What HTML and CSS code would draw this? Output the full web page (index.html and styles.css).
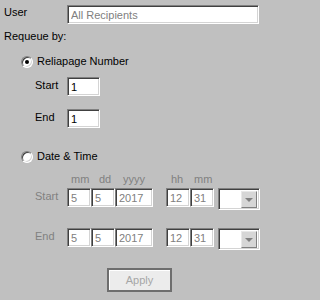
FILE: index.html
```html
<!DOCTYPE html>
<html>
<head>
<meta charset="utf-8">
<link rel="stylesheet" href="styles.css">
</head>
<body>
<div class="panel">
  <div class="user-row">
    <span class="user-label">User</span>
    <input class="field user-field" type="text" value="All Recipients" disabled>
  </div>
  <div class="requeue">Requeue by:</div>

  <div class="radio-row first-radio">
    <span class="radio checked"></span>
    <span class="radio-text">Reliapage Number</span>
  </div>
  <div class="num-row start-num">
    <span class="num-label">Start</span>
    <input class="field num-field" type="text" value="1">
  </div>
  <div class="num-row end-num">
    <span class="num-label">End</span>
    <input class="field num-field" type="text" value="1">
  </div>

  <div class="radio-row second-radio">
    <span class="radio"></span>
    <span class="radio-text">Date &amp; Time</span>
  </div>

  <div class="head-row">
    <span class="h h-mm">mm</span>
    <span class="h h-dd">dd</span>
    <span class="h h-yy">yyyy</span>
    <span class="h h-hh">hh</span>
    <span class="h h-mi">mm</span>
  </div>

  <div class="date-row start-date">
    <span class="date-label">Start</span>
    <input class="field dis w24" type="text" value="5" disabled>
    <input class="field dis w24" type="text" value="5" disabled>
    <input class="field dis w38" type="text" value="2017" disabled>
    <input class="field dis w24 gap-l" type="text" value="12" disabled>
    <input class="field dis w24" type="text" value="31" disabled>
    <span class="combo"><span class="combo-btn"><span class="arrow"></span></span></span>
  </div>

  <div class="date-row end-date">
    <span class="date-label">End</span>
    <input class="field dis w24" type="text" value="5" disabled>
    <input class="field dis w24" type="text" value="5" disabled>
    <input class="field dis w38" type="text" value="2017" disabled>
    <input class="field dis w24 gap-l" type="text" value="12" disabled>
    <input class="field dis w24" type="text" value="31" disabled>
    <span class="combo"><span class="combo-btn"><span class="arrow"></span></span></span>
  </div>

  <div class="apply-row">
    <button class="apply" disabled>Apply</button>
  </div>
</div>
</body>
</html>
```

FILE: styles.css
```css
html, body {
  margin: 0;
  padding: 0;
}
body {
  width: 266px;
  height: 300px;
  background: #c0c0c0;
  font-family: "Liberation Sans", Arial, sans-serif;
  font-size: 11px;
  line-height: 13px;
  color: #000;
  overflow: hidden;
}
.panel {
  display: flex;
  flex-direction: column;
}
.field {
  box-sizing: border-box;
  margin: 0;
  padding: 0 0 0 3px;
  height: 19px;
  font-family: "Liberation Sans", Arial, sans-serif;
  font-size: 11px;
  line-height: 13px;
  background: #fff;
  color: #000;
  border-style: solid;
  border-width: 1px;
  border-color: #808080 #ffffff #ffffff #808080;
  box-shadow: inset 1px 1px 0 #404040, inset -1px -1px 0 #d4d4d4;
  outline: none;
  -webkit-appearance: none;
  appearance: none;
}
.field:disabled {
  color: #808080;
  -webkit-text-fill-color: #808080;
  opacity: 1;
}

/* user row */
.user-row {
  display: flex;
  align-items: flex-start;
  margin-top: 5px;
  padding-left: 4px;
}
.user-label {
  width: 63px;
  margin-top: 1px;
}
.user-field {
  width: 192px;
}
.requeue {
  margin-top: 6px;
  padding-left: 4px;
}

/* radios */
.radio-row {
  display: flex;
  align-items: flex-start;
  padding-left: 21px;
}
.first-radio { margin-top: 12px; }
.second-radio { margin-top: 22px; }
.radio {
  position: relative;
  box-sizing: border-box;
  width: 12px;
  height: 12px;
  margin-top: 1px;
  border-radius: 50%;
  background: #fff;
  border: 1px solid;
  border-color: #808080 #ffffff #ffffff #808080;
  box-shadow: inset 1px 1px 0 #404040, inset -1px -1px 0 #d4d4d4;
}
.radio.checked::after {
  content: "";
  position: absolute;
  left: 3px;
  top: 3px;
  width: 4px;
  height: 4px;
  border-radius: 50%;
  background: #000;
}
.radio-text {
  margin-left: 4px;
}

/* number rows */
.num-row {
  display: flex;
  align-items: flex-start;
  padding-left: 35px;
}
.start-num { margin-top: 9px; }
.end-num { margin-top: 13px; }
.num-label {
  width: 32px;
  margin-top: 2px;
}
.num-field {
  width: 33px;
}

/* date header */
.head-row {
  display: flex;
  margin-top: 10px;
  padding-left: 67px;
  color: #808080;
  height: 13px;
}
.h { display: block; }
.h-mm { width: 24px; padding-left: 4px; box-sizing: border-box; }
.h-dd { width: 24px; padding-left: 8px; box-sizing: border-box; }
.h-yy { width: 51px; padding-left: 8px; box-sizing: border-box; }
.h-hh { width: 24px; padding-left: 5px; box-sizing: border-box; }
.h-mi { width: 24px; padding-left: 4px; box-sizing: border-box; }

/* date rows */
.date-row {
  display: flex;
  align-items: flex-start;
  padding-left: 35px;
}
.start-date { margin-top: 2px; }
.end-date { margin-top: 18px; }
.date-label {
  width: 32px;
  margin-top: 2px;
  color: #808080;
}
.w24 { width: 24px; }
.w38 { width: 38px; }
.gap-l { margin-left: 13px; }

.combo {
  box-sizing: border-box;
  display: flex;
  justify-content: flex-end;
  align-items: flex-start;
  width: 42px;
  height: 22px;
  margin-left: 4px;
  padding: 2px;
  background: #fff;
  border: 1px solid;
  border-color: #808080 #ffffff #ffffff #808080;
  box-shadow: inset 1px 1px 0 #404040, inset -1px -1px 0 #d4d4d4;
}
.combo-btn {
  box-sizing: border-box;
  display: flex;
  align-items: center;
  justify-content: center;
  width: 16px;
  height: 17px;
  background: #d6d6d6;
  border: 1px solid;
  border-color: #e8e8e8 #808080 #808080 #e8e8e8;
}
.arrow {
  width: 0;
  height: 0;
  border-left: 4px solid transparent;
  border-right: 4px solid transparent;
  border-top: 4px solid #808080;
}

/* apply */
.apply-row {
  display: flex;
  margin-top: 18px;
  padding-left: 107px;
}
.apply {
  box-sizing: border-box;
  width: 65px;
  height: 24px;
  margin: 0;
  padding: 0;
  background: #ececec;
  border: 2px solid #6e6e6e;
  box-shadow: inset 1px 1px 0 #ffffff;
  color: #a6a6a6;
  font-family: "Liberation Sans", Arial, sans-serif;
  font-size: 11px;
  line-height: 13px;
}
```
